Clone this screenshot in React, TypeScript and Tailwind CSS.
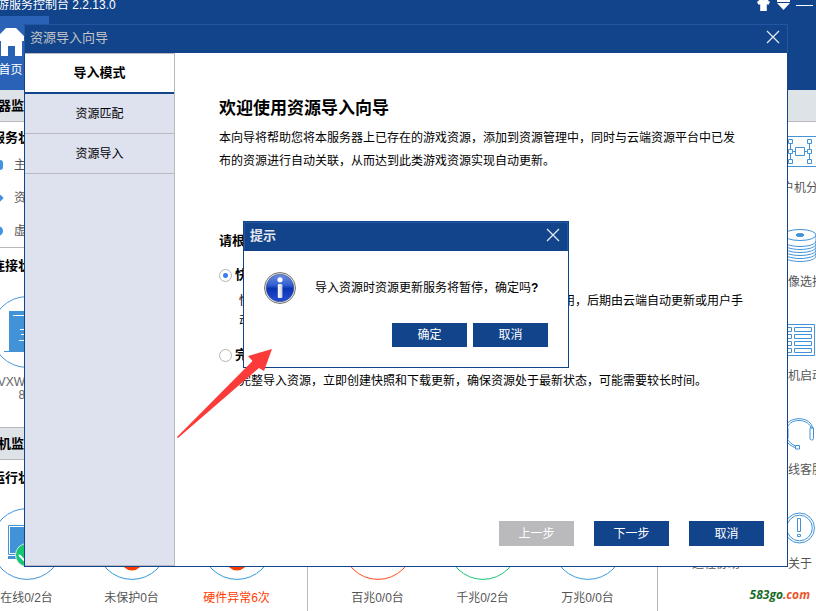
import { useState } from 'react';
import type { ReactNode } from 'react';

const steps = ['导入模式', '资源匹配', '资源导入'];

const services = [
  { name: '主服务', mark: 'size-2.5 rounded-[3px] bg-[#3f93e0]' },
  { name: '资源服务', mark: 'mx-px size-2 rotate-45 bg-[#3f93e0]' },
  { name: '虚拟盘服务', mark: 'size-2.5 rounded-full bg-[#3f93e6]' },
];

const hostStats = [
  { label: '在线0/2台', ring: '#4292d7', kind: 'online' },
  { label: '未保护0台', ring: '#2f9ad8', kind: 'warn' },
  { label: '硬件异常6次', ring: '#2f9ad8', kind: 'warn', alert: true },
];

const netStats = [
  { label: '百兆0/0台', ring: '#ff4a1c' },
  { label: '千兆0/2台', ring: '#17c671' },
  { label: '万兆0/0台', ring: '#3b9ddb' },
];

const CloseIcon = () => (
  <svg width="14" height="14" viewBox="0 0 14 14" fill="none" stroke="#e4eaf3" strokeWidth="1.3">
    <path d="M1 1l12 12M13 1L1 13" />
  </svg>
);

const GroupIcon = () => (
  <svg width="34" height="32" viewBox="0 0 34 32" fill="none" stroke="#4292d7">
    <path d="M.5 .5h33v30H.5z" />
    <path d="M12.500 11.500h9v8h-9zM5.500 3.500h4v4h-4zM5.500 13.500h4v4h-4zM5.500 23.500h4v4h-4zM24.500 3.500h4v4h-4zM24.500 13.500h4v4h-4zM24.500 23.500h4v4h-4z" />
    <path d="M7.500 7.500v6M7.500 17.500v6M26.500 7.500v6M26.500 17.500v6M9.500 15.500h3M21.500 15.500h3" />
  </svg>
);

const DiskIcon = () => (
  <svg width="34" height="34" viewBox="0 0 34 34" fill="none" stroke="#4292d7">
    <ellipse cx="17" cy="6" rx="16" ry="5.500" />
    <ellipse cx="17" cy="6" rx="4" ry="1.500" fill="#4292d7" />
    <path d="M1 6v21c0 3 7 5.500 16 5.500S33 30 33 27V6" />
    <path d="M1 12c0 3 7 5.500 16 5.500s16-2.500 16-5.500M1 15c0 3 7 5.500 16 5.500s16-2.500 16-5.500M1 18c0 3 7 5.500 16 5.500s16-2.500 16-5.500M1 21c0 3 7 5.500 16 5.500s16-2.500 16-5.500M1 24c0 3 7 5.500 16 5.500s16-2.500 16-5.500" />
  </svg>
);

const BootIcon = () => (
  <svg width="32" height="32" viewBox="0 0 32 32" fill="none" stroke="#4292d7">
    <path d="M.5 .5h30v31H.5z" />
    <path d="M2.500 3.500h5v4h-5zM2.500 10.500h5v4h-5zM2.500 17.500h5v4h-5zM2.500 24.500h5v4h-5zM10.500 3.500h17v4h-17zM10.500 10.500h17v4h-17zM10.500 17.500h17v4h-17zM10.500 24.500h17v4h-17z" />
  </svg>
);

const HeadsetIcon = () => (
  <svg width="32" height="32" viewBox="0 0 32 32" fill="none" stroke="#4292d7">
    <path d="M1 11C1.500 5 7 .7 15 .7S28 5 29 11M3 11C4 6 8 2.500 15 2.500S26 6 27.500 11" />
    <rect x="26" y="9" width="3.500" height="13" rx="1.700" />
    <rect x=".5" y="9" width="3.500" height="13" rx="1.700" />
    <path d="M2 22c2 4 5 6 9 7.500M3.500 21.500c2 3 4.500 5 8 6.500M11.500 27.500h4v3.500h-4z" />
  </svg>
);

const AboutIcon = () => (
  <svg width="32" height="32" viewBox="0 0 32 32" fill="none" stroke="#4292d7">
    <circle cx="15.500" cy="16" r="15" />
    <circle cx="15.500" cy="16" r="12.800" />
    <path d="M13.500 6.500h3v13h-3zM13.500 22.500h3v2h-3z" />
  </svg>
);

const InfoIcon = () => (
  <svg width="34" height="34" viewBox="0 0 34 34" className="shrink-0">
    <defs>
      <linearGradient id="info-ball" x1="0" y1="0" x2="0" y2="1">
        <stop offset="0" stopColor="#6d8fe0" />
        <stop offset=".4" stopColor="#2f5fd0" />
        <stop offset=".52" stopColor="#0c32b0" />
        <stop offset="1" stopColor="#2450d8" />
      </linearGradient>
      <linearGradient id="info-stem" x1="0" y1="0" x2="1" y2="0">
        <stop offset="0" stopColor="#fff" />
        <stop offset="1" stopColor="#c9ced8" />
      </linearGradient>
    </defs>
    <circle cx="17" cy="17" r="15.500" fill="#e8e8e8" stroke="#777" />
    <circle cx="17" cy="17" r="13.800" fill="url(#info-ball)" stroke="#3a4a80" strokeWidth=".6" />
    <circle cx="17" cy="8.800" r="2.600" fill="#fff" />
    <rect x="14.800" y="13" width="4.600" height="14" rx="1" fill="url(#info-stem)" />
  </svg>
);

const StatRing = ({ ring, kind }: { ring: string; kind?: string }) => (
  <svg width="72" height="72" viewBox="0 0 72 72" fill="none">
    <circle cx="36" cy="36" r="35.400" stroke={ring} />
    {kind === 'online' && (
      <>
        <path d="M17.500 17.500h38v29h-38z" fill="#fff" stroke="#4292d7" />
        <path d="M19 19h35v26H19zM17 48h39v3H17z" fill="#4292d7" />
        <circle cx="36" cy="47" r="11.500" fill="#17c671" stroke="#d5e6f5" />
        <path d="M28 47l5 5 9-9" stroke="#fff" strokeWidth="2" />
      </>
    )}
    {kind === 'warn' && <circle cx="36" cy="52" r="10.500" fill="#ff3c00" />}
  </svg>
);

const ServerRing = () => (
  <svg width="72" height="72" viewBox="0 0 72 72" fill="none">
    <circle cx="36" cy="36" r="35.400" stroke="#4a96e0" />
    <path d="M18 15h35v40h5v1H13v-1h5z" fill="#4292d7" />
    <path d="M22 19.500h27M29 33.500h12M30 38.500h10M28 44.500h14" stroke="#fff" />
  </svg>
);

const SectionBar = ({ title }: { title: string }) => (
  <h2 className="shrink-0 border-b border-[#b9b9bd] bg-[#dee3e7] pl-3 text-[13px] leading-[31px] font-bold text-black">{title}</h2>
);

const Tool = ({ label, children }: { label: string; children: ReactNode }) => (
  <a href="#" className="flex flex-col items-center pb-8 text-[#555]">
    <span className="flex h-8 w-9 items-center justify-center">{children}</span>
    <span className="mt-2.5 leading-5">{label}</span>
  </a>
);

// Main console window behind the wizard
const Console = () => (
  <div className="-ml-10 flex h-full flex-col">
    <header className="h-[90px] shrink-0 bg-[#11448a] text-white">
      <div className="flex h-2.5 items-center justify-between pl-[37px] pr-[3px]">
        <span className="whitespace-nowrap leading-3">游服务控制台 2.2.13.0</span>
        <div className="flex h-full items-center gap-1.5">
          <button type="button" aria-label="换肤">
            <svg width="15" height="12" viewBox="0 0 15 12" fill="#fff">
              <path d="M4.500 0h1.200c.8 1.500 2.800 1.500 3.600 0h1.200L14 3l-1.500 2.800-1.700-.6V12H4.200V5.200l-1.700.6L1 3z" />
            </svg>
          </button>
          <button type="button" aria-label="菜单">
            <svg width="13" height="10" viewBox="0 0 13 10" fill="#fff">
              <path d="M0 0h13v2H0zM0 3h13l-6.500 7z" />
            </svg>
          </button>
          <button type="button" aria-label="最小化" className="h-2.5 w-[17px]">
            <span className="block h-px bg-white" />
          </button>
        </div>
      </div>
      <nav className="mt-1.5">
        <a href="#" className="ml-3 flex h-[74px] w-[77px] flex-col items-center bg-[#2a62b8] pt-3">
          <svg width="28" height="28" viewBox="0 0 28 28" fill="#fff">
            <path d="M9 0h10l9 9v4h-3v15h-7V18h-7v10H4V13H0V9z" />
          </svg>
          <span className="mt-1 leading-5">首页</span>
        </a>
      </nav>
    </header>

    <div className="flex min-h-0 flex-1">
      <main className="flex min-w-0 flex-1 flex-col border-r border-[#b9b9bd]">
        <SectionBar title="服务器监控" />
        <h3 className="pt-1.5 pl-8 text-[13px] leading-5 font-bold text-black">服务状态</h3>
        <ul className="border-b border-[#b9b9bd] pl-[33px] text-[#555]">
          {services.map((s) => (
            <li key={s.name} className="flex h-[33px] items-center gap-[11px]">
              <span className={s.mark} />
              {s.name}
            </li>
          ))}
        </ul>
        <h3 className="mt-0.5 pl-8 text-[13px] leading-8 font-bold text-black">连接状态</h3>
        <div className="ml-3.5 flex h-[145px] w-[105px] shrink-0 flex-col items-center pt-3.5">
          <ServerRing />
          <p className="mt-2 text-center leading-[13px] whitespace-nowrap text-[#666]">
            GVXWIN-PC6
            <br />
            8G
          </p>
        </div>
        <div className="border-t border-[#b9b9bd]">
          <SectionBar title="客户机监控" />
        </div>
        <div className="flex min-h-0 flex-1">
          <section className="w-[348px] shrink-0 border-r border-[#b9b9bd] pl-3.5">
            <h3 className="pl-[18px] text-[13px] leading-9 font-bold text-black">运行状态</h3>
            <div className="mt-3 flex">
              {hostStats.map((s) => (
                <div key={s.label} className="flex w-[105px] flex-col items-center">
                  <StatRing ring={s.ring} kind={s.kind} />
                  <span className={s.alert ? 'mt-2 leading-5 text-[#ff3c00]' : 'mt-2 leading-5 text-[#555]'}>{s.label}</span>
                </div>
              ))}
            </div>
          </section>
          <section className="flex-1">
            <h3 className="pl-4 text-[13px] leading-9 font-bold text-black">网络状态</h3>
            <div className="mt-3 flex justify-center">
              {netStats.map((s) => (
                <div key={s.label} className="flex w-[105px] flex-col items-center">
                  <StatRing ring={s.ring} />
                  <span className="mt-2 leading-5 text-[#555]">{s.label}</span>
                </div>
              ))}
            </div>
          </section>
        </div>
      </main>

      <aside className="flex w-[158px] shrink-0 flex-col overflow-hidden">
        <SectionBar title="常用工具" />
        <div className="mt-3.5 flex pl-4">
          <div className="flex w-[84px] shrink-0 flex-col justify-end">
            <Tool label="远程协助"><HeadsetIcon /></Tool>
          </div>
          <div className="w-[84px] shrink-0">
            <Tool label="客户机分组"><GroupIcon /></Tool>
            <Tool label="镜像选择"><DiskIcon /></Tool>
            <Tool label="开机启动"><BootIcon /></Tool>
            <Tool label="在线客服"><HeadsetIcon /></Tool>
            <Tool label="关于"><AboutIcon /></Tool>
          </div>
        </div>
      </aside>
    </div>
  </div>
);

const radioClass =
  'size-[13px] shrink-0 appearance-none rounded-full border border-[#b5b5b5] bg-white checked:bg-[radial-gradient(circle,#3b7cf0_0_2px,#fff_3px)]';

const Wizard = () => {
  const [mode, setMode] = useState('fast');

  return (
    <div role="dialog" aria-label="资源导入向导" className="absolute top-6 right-7 bottom-11 left-6 flex flex-col border border-[#11448a] bg-white">
      <div className="-m-px mb-0 flex h-[29px] shrink-0 items-center justify-between border border-b-0 border-[#2457a0] bg-[#11448a] pr-[7px] pb-1 pl-[5px]">
        <h1 className="text-[13px] leading-none text-[#c4c4c8]">资源导入向导</h1>
        <button type="button" aria-label="关闭"><CloseIcon /></button>
      </div>

      <div className="flex min-h-0 flex-1">
        <nav className="flex w-[150px] shrink-0 flex-col border-t border-r border-b border-[#b9b9c1] bg-[#dee2ef] text-black">
          {steps.map((step, idx) => (
            <button
              key={step}
              type="button"
              className={
                idx === 0
                  ? 'h-10 border-b-2 border-[#11448a] bg-white text-[13px] font-bold'
                  : 'h-10 border-b border-[#b9b9c1]'
              }
            >
              {step}
            </button>
          ))}
        </nav>

        <div className="flex min-w-0 flex-1 flex-col text-black">
          <div className="px-11 pt-[42px]">
            <h2 className="text-[17px] leading-7 font-bold">欢迎使用资源导入向导</h2>
            <p className="mt-1 leading-[23px]">
              本向导将帮助您将本服务器上已存在的游戏资源，添加到资源管理中，同时与云端资源平台中已发布的资源进行自动关联，从而达到此类游戏资源实现自动更新。
            </p>

            <h3 className="mt-14 text-[13px] leading-6 font-bold">请根据需要选择导入模式：</h3>
            <label className="mt-2.5 flex h-6 items-center gap-[3px] text-[13px] font-bold">
              <input type="radio" name="mode" className={radioClass} checked={mode === 'fast'} onChange={() => setMode('fast')} />
              快速模式
            </label>
            <p className="mt-1 pl-5 leading-5">
              快速导入资源，暂不创建快照和下载更新，导入完成后即可使用，后期由云端自动更新或用户手动更新。
            </p>
            <label className="mt-3 flex h-6 items-center gap-[3px] text-[13px] font-bold">
              <input type="radio" name="mode" className={radioClass} checked={mode === 'full'} onChange={() => setMode('full')} />
              完整模式
            </label>
            <p className="mt-1 pl-5 leading-5">
              完整导入资源，立即创建快照和下载更新，确保资源处于最新状态，可能需要较长时间。
            </p>
          </div>

          <div className="mt-auto flex justify-end gap-5 pr-[23px] pb-5 text-white">
            <button type="button" disabled className="h-[25px] w-[75px] bg-[#bab9bc]">上一步</button>
            <button type="button" className="h-[25px] w-[75px] bg-[#11448a]">下一步</button>
            <button type="button" className="h-[25px] w-[75px] bg-[#11448a]">取消</button>
          </div>
        </div>
      </div>
    </div>
  );
};

const ConfirmDialog = () => (
  <div className="absolute top-6 right-7 bottom-[46px] left-6 flex items-center justify-center">
    <div role="alertdialog" aria-label="提示" className="w-[326px] border border-[#11448a] bg-white text-black">
      <div className="flex h-[29px] items-center justify-between border border-b-0 border-[#2457a0] bg-[#11448a] pr-[7px] pb-1 pl-[5px]">
        <h2 className="text-[13px] leading-none font-bold text-[#e6e8ee]">提示</h2>
        <button type="button" aria-label="关闭"><CloseIcon /></button>
      </div>
      <div className="flex items-center gap-[18px] pt-5 pl-[19px]">
        <InfoIcon />
        <p>导入资源时资源更新服务将暂停，确定吗<b>?</b></p>
      </div>
      <div className="mt-[18px] flex justify-end gap-1.5 pr-5 pb-5 text-white">
        <button type="button" className="h-6 w-[75px] bg-[#11448a]">确定</button>
        <button type="button" className="h-6 w-[75px] bg-[#11448a]">取消</button>
      </div>
    </div>
  </div>
);

export default function App() {
  return (
    <div className="relative h-screen overflow-hidden bg-white font-['Liberation_Sans','Noto_Sans_CJK_SC',sans-serif] text-xs">
      <Console />
      <Wizard />
      <ConfirmDialog />
      <svg className="absolute top-[349px] left-[177px]" width="96" height="90" viewBox="0 0 96 90" fill="#fb3a3a">
        <path d="M95 0L71 7l4.500 5L0 88l1 1L82 19l5 3z" />
      </svg>
      <div className="absolute right-1.5 bottom-2 font-['Open_Sans','Noto_Sans',sans-serif] leading-4 font-bold text-[#1a6b2a] italic">
        583go<span className="text-[#e8552e]">.com</span>
      </div>
    </div>
  );
}
